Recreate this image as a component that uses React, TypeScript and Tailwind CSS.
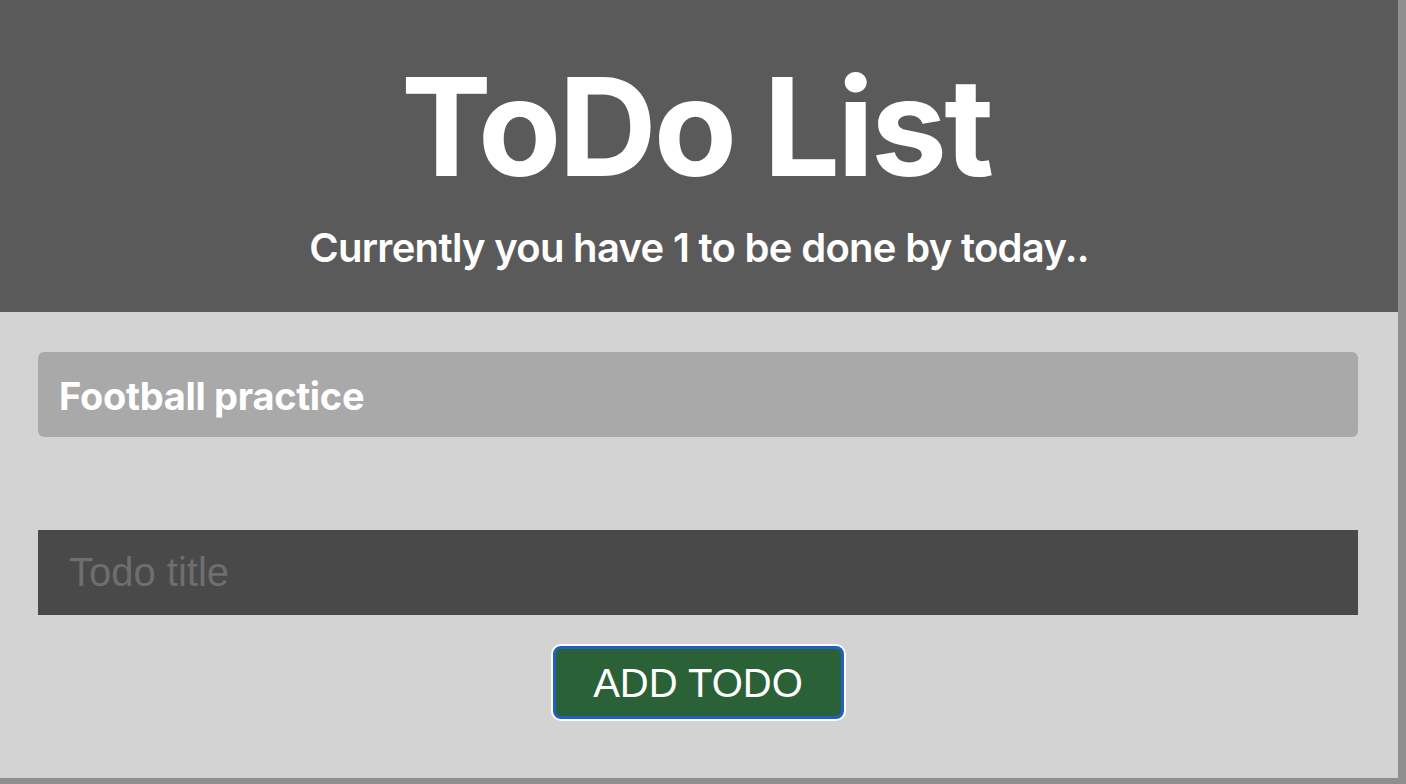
import { useState } from 'react';

function App() {
  const [title, setTitle] = useState('');
  const todos = ['Football practice'];

  return (
    <div className="min-h-screen w-full bg-[#8f8f8f]">
      <div className="w-[1398px] h-[778px] bg-[#d3d3d3] flex flex-col" style={{ fontFamily: 'Inter, "Noto Sans", sans-serif' }}>
        <header className="bg-[#5a5a5a] h-[312px] flex flex-col items-center text-white">
          <h1 className="mt-[52px] mr-[6px] text-[136px] leading-[150px] font-bold tracking-[-3px]">ToDo List</h1>
          <p className="mt-[22px] text-[40px] leading-[48px] font-semibold tracking-[-0.7px]">
            Currently you have {todos.length} to be done by today..
          </p>
        </header>

        <main className="pl-[38px] pr-[40px] pt-[40px] flex flex-col">
          {todos.map((t) => (
            <div key={t} className="h-[85px] bg-[#a9a9a9] rounded-md flex items-center px-[21px]">
              <span className="text-white font-bold text-[38px] tracking-[-0.3px] leading-[46px] mt-[2px]">{t}</span>
            </div>
          ))}

          <input
            value={title}
            onChange={(e) => setTitle(e.target.value)}
            placeholder="Todo title"
            className="mt-[93px] h-[85px] bg-[#494949] px-[31px] text-[40px] text-white placeholder:text-[#6e6e6e] outline-none"
            style={{ fontFamily: '"Liberation Sans", Arial, sans-serif' }}
          />

          <div className="flex justify-center mt-[31px]">
            <button
              className="w-[291px] h-[73px] rounded-lg border-[3px] border-[#1e5fc8] ring-2 ring-white bg-[#2a6137] text-white text-[40px]"
              style={{ fontFamily: '"Liberation Sans", Arial, sans-serif' }}
            >
              ADD TODO
            </button>
          </div>
        </main>
      </div>
    </div>
  );
}

export default App;
